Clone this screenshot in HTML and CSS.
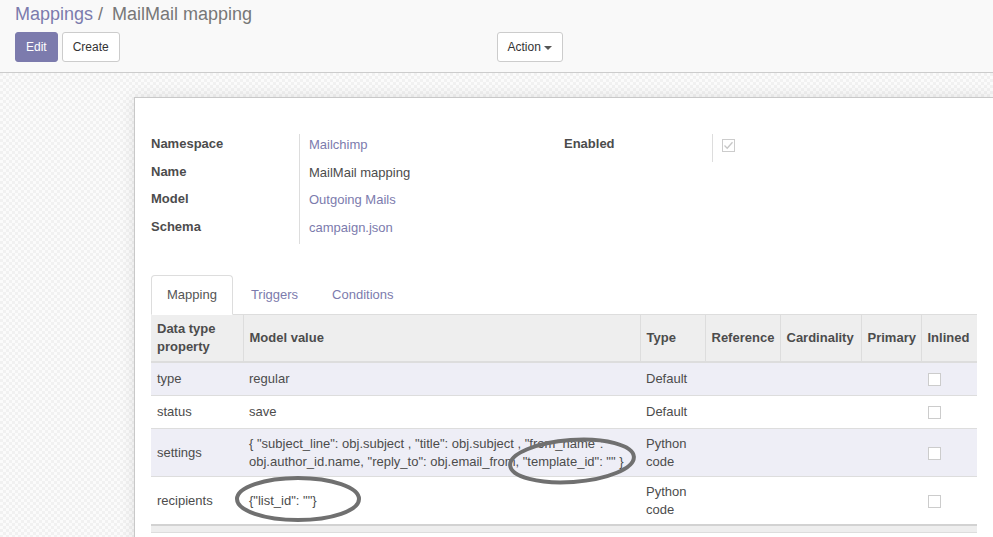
FILE: index.html
```html
<!DOCTYPE html>
<html>
<head>
<meta charset="utf-8">
<link rel="stylesheet" href="styles.css">
</head>
<body>
<div class="cp">
  <div class="breadcrumb"><a class="bc-link">Mappings</a><span class="bc-sep">/</span><span class="bc-active">MailMail mapping</span></div>
  <div class="cp-row">
    <div class="cp-left">
      <button class="btn btn-primary">Edit</button>
      <button class="btn">Create</button>
    </div>
    <div class="cp-right">
      <button class="btn">Action <span class="caret"></span></button>
    </div>
  </div>
</div>
<div class="content">
  <div class="sheet">
    <div class="groups">
      <div class="group">
        <div class="lbl">Namespace</div><div class="val link">Mailchimp</div>
        <div class="lbl">Name</div><div class="val">MailMail mapping</div>
        <div class="lbl">Model</div><div class="val link">Outgoing Mails</div>
        <div class="lbl">Schema</div><div class="val link">campaign.json</div>
      </div>
      <div class="group">
        <div class="lbl">Enabled</div><div class="val"><span class="check checked"><svg width="11" height="11" viewBox="0 0 11 11"><path d="M1.5 5.5 L4.2 8.2 L9.5 2.2" fill="none" stroke="#c6c6c6" stroke-width="1.3"/></svg></span></div>
      </div>
    </div>
    <ul class="tabs">
      <li class="tab active">Mapping</li>
      <li class="tab">Triggers</li>
      <li class="tab">Conditions</li>
    </ul>
    <table class="list">
      <colgroup>
        <col class="c1"><col class="c2"><col class="c3"><col class="c4"><col class="c5"><col class="c6"><col class="c7">
      </colgroup>
      <thead>
        <tr><th>Data type property</th><th>Model value</th><th>Type</th><th>Reference</th><th>Cardinality</th><th>Primary</th><th>Inlined</th></tr>
      </thead>
      <tbody>
        <tr class="odd"><td>type</td><td>regular</td><td>Default</td><td></td><td></td><td></td><td><div class="cb-wrap"><span class="check"></span></div></td></tr>
        <tr><td>status</td><td>save</td><td>Default</td><td></td><td></td><td></td><td><div class="cb-wrap"><span class="check"></span></div></td></tr>
        <tr class="odd tall"><td>settings</td><td>{ "subject_line": obj.subject , "title": obj.subject , "from_name": obj.author_id.name, "reply_to": obj.email_from, "template_id": "" }</td><td>Python code</td><td></td><td></td><td></td><td><div class="cb-wrap"><span class="check"></span></div></td></tr>
        <tr class="tall"><td>recipients</td><td>{"list_id": ""}</td><td>Python code</td><td></td><td></td><td></td><td><div class="cb-wrap"><span class="check"></span></div></td></tr>
      </tbody>
      <tfoot>
        <tr><td colspan="7"></td></tr>
      </tfoot>
    </table>
  </div>
</div>
<svg class="marks" width="993" height="537" viewBox="0 0 993 537">
  <ellipse cx="572" cy="461" rx="62" ry="21" transform="rotate(-4 572 461)" fill="none" stroke="#707070" stroke-width="4"/>
  <ellipse cx="298" cy="499" rx="61" ry="21" fill="none" stroke="#707070" stroke-width="4"/>
</svg>
</body>
</html>
```
FILE: styles.css
```css
html, body {
  margin: 0;
  padding: 0;
}
body {
  width: 993px;
  height: 537px;
  overflow: hidden;
  position: relative;
  font-family: "Liberation Sans", Arial, sans-serif;
  font-size: 13px;
  line-height: 18px;
  color: #4c4c4c;
  background: #f5f5f5;
}
.cp {
  background: #f9f9f9;
  border-bottom: 1px solid #cccccc;
  padding: 4px 15px 10px;
  height: 58px;
}
.breadcrumb {
  font-size: 18px;
  line-height: 20px;
  height: 20px;
}
.bc-link {
  color: #7c7bad;
}
.bc-sep {
  color: #777777;
  padding: 0 9px 0 5px;
}
.bc-active {
  color: #777777;
}
.cp-row {
  display: grid;
  grid-template-columns: 1fr 1fr;
  margin-top: 8px;
}
.cp-left {
  display: flex;
  gap: 4px;
}
.btn {
  font-family: inherit;
  font-size: 12px;
  line-height: 18px;
  height: 30px;
  padding: 5px 10px;
  border: 1px solid #cccccc;
  border-radius: 3px;
  background: #ffffff;
  color: #333333;
  margin: 0;
}
.btn-primary {
  background: #7c7bad;
  border-color: #7c7bad;
  color: #ffffff;
}
.caret {
  display: inline-block;
  width: 0;
  height: 0;
  border-left: 4px solid transparent;
  border-right: 4px solid transparent;
  border-top: 4px solid #555555;
  vertical-align: middle;
}
.content {
  height: 464px;
  padding-top: 24px;
  box-sizing: border-box;
  background-color: #f6f6f6;
  background-image: conic-gradient(#fbfbfb 25%, #f1f1f1 0 50%, #fbfbfb 0 75%, #f1f1f1 0);
  background-size: 6px 6px;
}
.sheet {
  margin-left: 134px;
  width: 860px;
  box-sizing: border-box;
  background: #ffffff;
  border: 1px solid #c8c8c8;
  padding: 36px 16px 0;
  height: 460px;
  box-shadow: 0 0 14px rgba(0,0,0,0.10);
}
.groups {
  display: grid;
  grid-template-columns: 413px 413px;
}
.group {
  display: grid;
  grid-template-columns: 149px 1fr;
  align-content: start;
}
.lbl {
  font-weight: bold;
  border-right: 1px solid #dddddd;
  padding: 1px 0 8.5px;
}
.val {
  padding: 2px 0 7.5px 9px;
  color: #4c4c4c;
}
.link {
  color: #7c7bad;
}
.check {
  display: inline-block;
  width: 11px;
  height: 11px;
  border: 1px solid #cccccc;
  background: #ffffff;
  vertical-align: top;
  position: relative;
}
.check svg {
  display: block;
}
.group .check {
  margin-top: 3px;
}
.tabs {
  list-style: none;
  margin: 31px 0 0;
  padding: 0;
  display: flex;
  border-bottom: 1px solid #dddddd;
}
.tab {
  padding: 10px 15px;
  margin: 0 2px -1px 0;
  border: 1px solid transparent;
  border-radius: 4px 4px 0 0;
  color: #7c7bad;
  line-height: 18px;
}
.tab.active {
  background: #ffffff;
  color: #555555;
  border-color: #dddddd;
  border-bottom-color: transparent;
}
.list {
  width: 826px;
  border-collapse: collapse;
  table-layout: fixed;
}
.c1 { width: 92px; }
.c2 { width: 397px; }
.c3 { width: 65px; }
.c4 { width: 75px; }
.c5 { width: 81px; }
.c6 { width: 60px; }
.c7 { width: 56px; }
.list th {
  background: #eeeeee;
  text-align: left;
  font-weight: bold;
  padding: 5px 6px;
  line-height: 18px;
  vertical-align: middle;
  border-bottom: 2px solid #dddddd;
  border-left: 1px solid #dddddd;
}
.list th:first-child {
  border-left: none;
}
.list td {
  padding: 5px 6px;
  line-height: 18px;
  vertical-align: middle;
  border-top: 1px solid #dddddd;
}
.list tr.odd td {
  background: #eeeef6;
}
.list tr.tall td {
  padding-top: 6px;
}
.cb-wrap {
  height: 22px;
  display: flex;
  align-items: center;
  padding-left: 1px;
}
.list tfoot td {
  padding: 0;
  height: 6px;
  background: #eeeeee;
  border-top: 2px solid #d2d2d2;
  border-bottom: 1px solid #dddddd;
}
.marks {
  position: absolute;
  left: 0;
  top: 0;
  pointer-events: none;
}
```
